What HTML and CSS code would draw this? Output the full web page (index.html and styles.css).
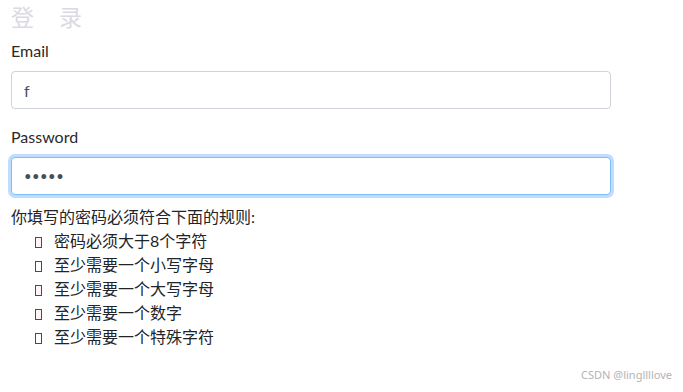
FILE: index.html
```html
<!DOCTYPE html>
<html lang="zh-CN">
<head>
    <meta charset="UTF-8">
    <title>登录</title>
    <link rel="stylesheet" href="styles.css">
</head>
<body>
<div class="page">
    <h2 class="title"><span>登</span><span>录</span></h2>
    <form class="login-form">
        <div class="form-group">
            <label class="form-label">Email</label>
            <input class="form-input" type="text" value="f">
        </div>
        <div class="form-group">
            <label class="form-label">Password</label>
            <input class="form-input pwd-input is-focus" type="password" value="12345">
        </div>
    </form>
    <p class="rule-tip">你填写的密码必须符合下面的规则:</p>
    <ul class="rule-list">
        <li><svg class="mark" width="7" height="11" viewBox="0 0 7 11"><rect x="0.5" y="0.5" width="6" height="10" fill="#fff5f5" stroke="#ff0000"/></svg>密码必须大于8个字符</li>
        <li><svg class="mark" width="7" height="11" viewBox="0 0 7 11"><rect x="0.5" y="0.5" width="6" height="10" fill="#fff" stroke="#008000"/></svg>至少需要一个小写字母</li>
        <li><svg class="mark" width="7" height="11" viewBox="0 0 7 11"><rect x="0.5" y="0.5" width="6" height="10" fill="#fff5f5" stroke="#ff0000"/></svg>至少需要一个大写字母</li>
        <li><svg class="mark" width="7" height="11" viewBox="0 0 7 11"><rect x="0.5" y="0.5" width="6" height="10" fill="#fff5f5" stroke="#ff0000"/></svg>至少需要一个数字</li>
        <li><svg class="mark" width="7" height="11" viewBox="0 0 7 11"><rect x="0.5" y="0.5" width="6" height="10" fill="#fff" stroke="#008000"/></svg>至少需要一个特殊字符</li>
    </ul>
</div>
<div class="watermark">CSDN @lingllllove</div>
</body>
</html>
```

FILE: styles.css
```css
html,body{
    margin: 0;
    background: #fff;
}
body{
    font-family: Lato, "Noto Sans CJK SC", sans-serif;
    font-size: 16px;
    line-height: 1.5;
    color: #212529;
}
.page{
    padding: 0 11px;
}
/*标题*/
.title{
    display: flex;
    gap: 25px;
    margin: 0 0 8px;
    padding-top: 1px;
    font-family: "Noto Sans CJK SC", sans-serif;
    font-size: 23px;
    font-weight: 400;
    line-height: 30px;
    color: #d9dae3;
}
.login-form{
    width: 600px;
}
.form-group{
    margin-bottom: 16px;
}
.form-group:last-child{
    margin-bottom: 0;
}
.form-label{
    display: block;
    margin-bottom: 8px;
    color: #2a2a2a;
}
.form-input{
    display: block;
    box-sizing: border-box;
    width: 100%;
    height: 38px;
    padding: 6px 12px;
    font-family: Lato, "Noto Sans CJK SC", sans-serif;
    font-size: 16px;
    color: #495057;
    background: #fff;
    border: 1px solid #ced4da;
    border-radius: 4px;
    outline: none;
}
/*密码圆点小一点*/
.pwd-input{
    font-size: 13px;
    letter-spacing: 0.5px;
}
/*获得焦点时的样子*/
.form-input.is-focus{
    border-color: #80bdff;
    box-shadow: 0 0 0 3px rgba(0,123,255,.25);
}
.rule-tip{
    margin: 10px 0 0;
    line-height: 24px;
}
.rule-list{
    margin: 0;
    padding-left: 24px;
    list-style: none;
    line-height: 24px;
}
.mark{
    display: inline-block;
    margin-right: 12px;
    vertical-align: -1px;
}
.watermark{
    position: absolute;
    right: 11px;
    bottom: 9px;
    font-family: "Noto Sans", sans-serif;
    font-size: 11px;
    color: #b4b4b4;
}
```
